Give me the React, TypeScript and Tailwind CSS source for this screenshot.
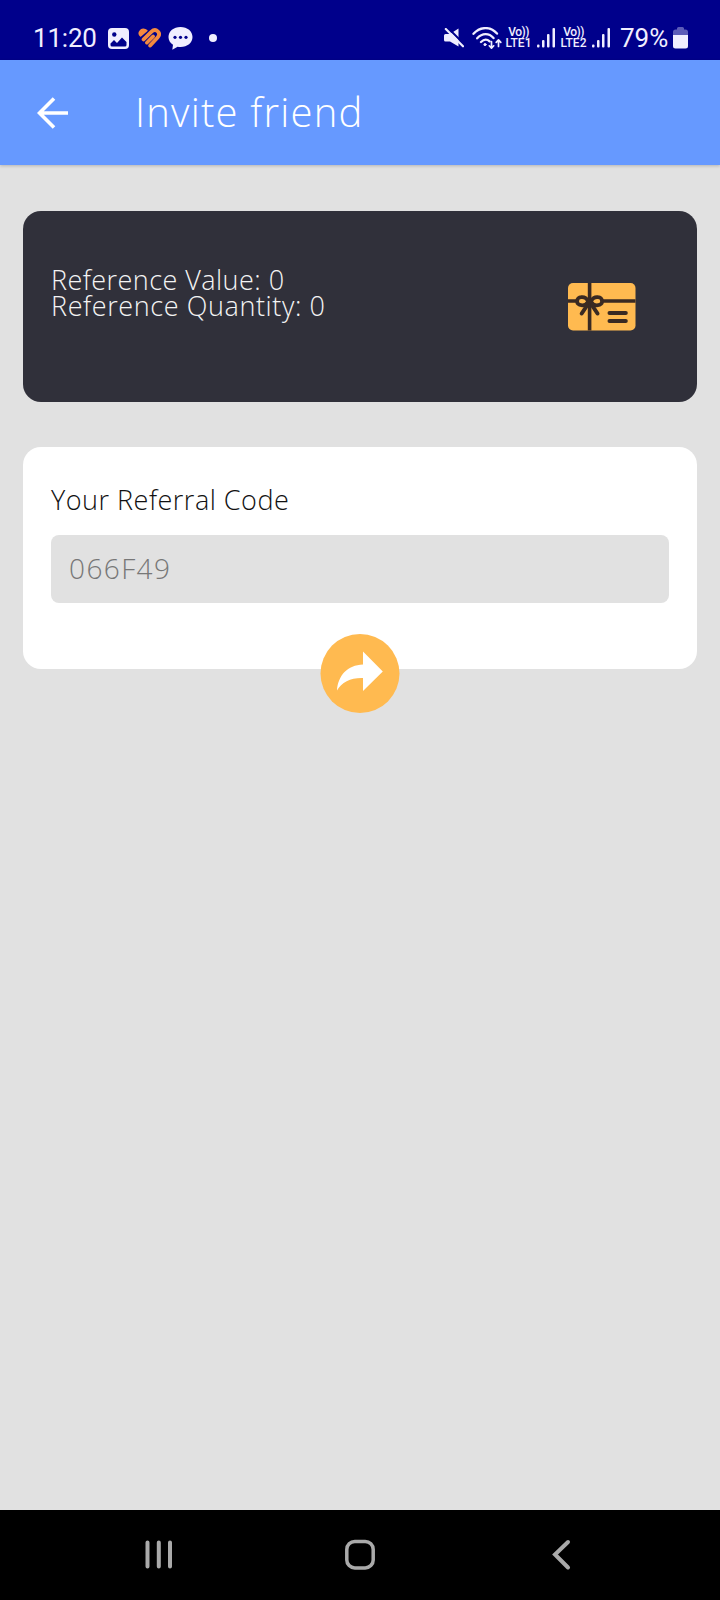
import React from "react";

const reward = {
  value: 0,
  quantity: 0,
  code: "066F49",
};

function ImageIcon() {
  return (
    <svg className="ml-3 h-[21px] w-[21px]" viewBox="0 0 21 21">
      <rect width="21" height="21" rx="4" fill="#f0eeff" />
      <circle cx="6.3" cy="6.5" r="2.2" fill="#00008b" />
      <path d="M2.5 15.5 6 12.1l3 2.8 5-5.5 4.5 4.6V17a1.5 1.5 0 0 1-1.5 1.5H4A1.5 1.5 0 0 1 2.5 17z" fill="#00008b" />
    </svg>
  );
}

function HeartIcon() {
  return (
    <svg className="ml-[9px] h-5 w-[23px]" viewBox="0 0 23 20" fill="none" stroke="#f58a3f" strokeLinecap="round" strokeLinejoin="round">
      <path d="M2.6 8 8.8 2.6C6.5.6 3.6.9 2.2 2.9.9 4.6 1.2 6.7 2.6 8z" fill="#f58a3f" strokeWidth="1.6" />
      <path d="M5.6 11.4 13.3 3.9c2.2-2.1 4.7-2.2 6.4-.6 1.8 1.8 1.7 4.2-.1 6.1L12.2 17.6" strokeWidth="3.8" />
      <path d="m8.8 14.7 6.4-6.3" strokeWidth="3.6" />
    </svg>
  );
}

function ChatIcon() {
  return (
    <svg className="ml-[7px] h-[23px] w-[25px]" viewBox="0 0 25 23">
      <path d="M12.5 0C5.6 0 .5 4.2.5 10c0 3.3 1.7 6 4.5 7.8L4.3 22.8l5.3-3.1c1 .2 1.9.3 2.9.3 6.9 0 12-4.2 12-10S19.400 0 12.500 0z" fill="#f0eeff" />
      <g fill="#00008b">
        <circle cx="7" cy="10.3" r="1.6" />
        <circle cx="12.5" cy="10.3" r="1.6" />
        <circle cx="18" cy="10.3" r="1.6" />
      </g>
    </svg>
  );
}

function MuteIcon() {
  return (
    <svg className="h-5 w-5" viewBox="0 0 20 20">
      <path d="M0 7.5a1.5 1.5 0 0 1 1.5-1.5H6L14.5.5v18L6 13.5H1.5A1.5 1.5 0 0 1 0 12z" fill="#f0eeff" />
      <path d="m3.2-.8 17.5 17.5" stroke="#00008b" strokeWidth="2" />
      <path d="m1.8 1 17.2 17.3" stroke="#f0eeff" strokeWidth="2.2" strokeLinecap="round" />
    </svg>
  );
}

function WifiIcon() {
  return (
    <svg className="ml-[8px] h-[23px] w-[30px]" viewBox="0 0 30 23" fill="none" stroke="#f0eeff" strokeWidth="2.3" strokeLinecap="round" strokeLinejoin="round">
      <path d="M1.5 6.8C8-.6 18.5-1 25 6.6M5.2 11.3c5-5.4 11.8-5.4 16.3-.2M9 15c3-2.9 6-3 8.6-.6" />
      <circle cx="13" cy="17.6" r="1.1" fill="#f0eeff" strokeWidth="1" />
      <path d="M19.5 14.5v6.5M17.3 18.8l2.2 2.4 2.2-2.4M26.5 19.5V13M24.2 15.3l2.3-2.5 2.3 2.5" strokeWidth="1.7" />
    </svg>
  );
}

function Volte({ sim }: { sim: number }) {
  return (
    <div className="flex w-[27px] flex-col items-center font-['Roboto',sans-serif] text-[12px] font-medium leading-[11px] text-[#f0eeff]">
      <span className="tracking-[-0.5px]">Vo))</span>
      <span>LTE{sim}</span>
    </div>
  );
}

function SignalIcon() {
  return (
    <svg className="h-5 w-[18px]" viewBox="0 0 18 20" fill="#f0eeff">
      <rect x="0" y="16.5" width="2.5" height="3" rx="1" />
      <rect x="5" y="12" width="2.5" height="7.5" rx="1" />
      <rect x="10" y="6" width="2.5" height="13.5" rx="1" />
      <rect x="15.5" y="0" width="2.5" height="19.5" rx="1" />
    </svg>
  );
}

function BatteryIcon() {
  return (
    <svg className="h-[22px] w-[15px]" viewBox="0 0 15 22">
      <path d="M4 2.5V1.5A1.5 1.5 0 0 1 5.5 0h4A1.5 1.5 0 0 1 11 1.5v1h1.5A2.5 2.5 0 0 1 15 5v3H0V5a2.5 2.5 0 0 1 2.5-2.5z" fill="#5c5cb8" />
      <path d="M0 8h15v11a2.5 2.5 0 0 1-2.5 2.5h-10A2.5 2.5 0 0 1 0 19z" fill="#f0eeff" />
    </svg>
  );
}

function StatusBar() {
  return (
    <div className="flex h-[60px] items-end justify-between bg-[#00008b] pb-[10px] pl-[33px] pr-[32px] font-['Roboto',sans-serif] text-[26px] font-normal text-[#f0eeff]">
      <div className="flex h-6 items-center">
        <span className="w-[63px] tracking-[-0.2px]">11:20</span>
        <ImageIcon />
        <HeartIcon />
        <ChatIcon />
        <span className="ml-4 h-2 w-2 rounded-full bg-[#f0eeff]" />
      </div>
      <div className="flex h-6 items-center">
        <MuteIcon />
        <WifiIcon />
        <div className="ml-[3px] flex items-center gap-[5px]">
          <Volte sim={1} />
          <SignalIcon />
        </div>
        <div className="ml-[5px] flex items-center gap-[5px]">
          <Volte sim={2} />
          <SignalIcon />
        </div>
        <span className="ml-2.5 mr-[5px] w-[48px]">79%</span>
        <BatteryIcon />
      </div>
    </div>
  );
}

function GiftCardIcon() {
  return (
    <svg className="h-12 w-[68px]" viewBox="0 0 68 48" fill="none" strokeLinecap="round">
      <rect width="67.5" height="47.5" rx="5" fill="#ffba50" />
      <g stroke="#3a2a22">
        <path d="M0 18h67.5M21.6 0v47.5" strokeWidth="3.6" strokeLinecap="butt" />
        <path d="M20.5 18.5c-2-3.5-5-4.7-7.4-4.3a4 4 0 0 0 0 8c2.4.4 5.4-.6 7.4-3.7zM22.7 18.5c2-3.5 5-4.7 7.4-4.3a4 4 0 0 1 0 8c-2.4.4-5.4-.6-7.4-3.7z" fill="#ffba50" strokeWidth="3.8" />
        <path d="m18.7 23-5 7.5M24.5 23l5 7.5" strokeWidth="4" />
        <path d="M41.5 30h16.3M41.5 38h16.3" strokeWidth="4" />
      </g>
    </svg>
  );
}

function ShareButton() {
  return (
    <button
      type="button"
      aria-label="Share"
      className="absolute -bottom-11 left-1/2 h-[79px] w-[79px] -translate-x-1/2 rounded-full bg-[#ffba50]"
    >
      <svg className="h-full w-full" viewBox="0 0 79 79" fill="#fff">
        <path d="M42.5 17.5 62.3 37.5 42.5 57V44C31 43.5 21 48 16.5 56.5 17.5 41.5 27 31 42.5 30.5z" />
      </svg>
    </button>
  );
}

function NavigationBar() {
  return (
    <nav className="flex h-[90px] items-center justify-between bg-black px-[145px]">
      <svg className="h-8 w-7" viewBox="0 0 28 32" stroke="#aaa" strokeWidth="4" strokeLinecap="round">
        <path d="M2.5 3.5v24M13.8 3.5v24M25 3.5v24" />
      </svg>
      <svg className="h-8 w-8" viewBox="0 0 32 32" fill="none" stroke="#aaa" strokeWidth="3.5">
        <rect x="2.8" y="2.5" width="26.4" height="26.4" rx="8" />
      </svg>
      <svg className="h-8 w-7" viewBox="0 0 28 32" fill="none" stroke="#aaa" strokeWidth="4" strokeLinecap="round">
        <path d="M21 3 8 15.5 21 28.5" />
      </svg>
    </nav>
  );
}

export default function App() {
  return (
    <div className="flex h-[1600px] w-[720px] flex-col overflow-hidden bg-[#e1e1e1] font-['Open_Sans',sans-serif] font-[340]">
      <StatusBar />

      <header className="flex h-[105px] items-center bg-[#6699ff] pl-[37px] text-white shadow-[0_1px_3px_rgba(0,0,0,0.2)]">
        <svg className="h-8 w-8" viewBox="0 0 32 32" fill="none" stroke="currentColor" strokeWidth="3.6">
          <path d="M31 16H3.5M17 1.5 2.5 16 17 30.5" />
        </svg>
        <h1 className="ml-[66px] pb-0.5 text-[40px] font-[320] leading-none tracking-[1.2px]">Invite friend</h1>
      </header>

      <main className="flex-1 px-[23px] pt-[46px]">
        <section className="flex h-[191px] items-center justify-between rounded-[18px] bg-[#30303a] pl-7 pr-[61px] text-[27px] leading-[26px] text-[#f4f4f4]">
          <div className="pb-7">
            <p className="tracking-[0.45px]">Reference Value: {reward.value}</p>
            <p className="tracking-[0.6px]">Reference Quantity: {reward.quantity}</p>
          </div>
          <GiftCardIcon />
        </section>

        <section className="relative mt-[45px] h-[222px] rounded-[18px] bg-white px-7 pt-[35px] text-[27px]">
          <h2 className="leading-9 tracking-[0.5px] text-[#111]">Your Referral Code</h2>
          <div className="mt-[17px] flex h-[68px] items-center rounded-lg bg-[#e1e1e1] pb-0.5 pl-[18px] text-[#777]">
            <span className="text-[28px] tracking-[1.4px]">{reward.code}</span>
          </div>
          <ShareButton />
        </section>
      </main>

      <NavigationBar />
    </div>
  );
}
